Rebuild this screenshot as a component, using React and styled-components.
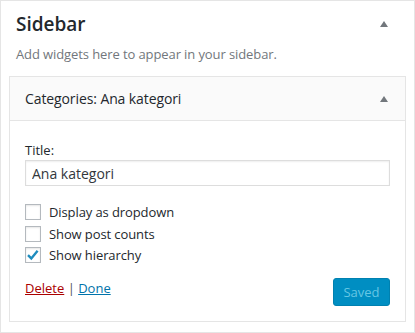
import React from "react"
import styled, { createGlobalStyle } from "styled-components"

const GlobalStyle = createGlobalStyle`
  body {
    margin: 0;
    background: #fff;
    font-family: "Open Sans", "Noto Sans", sans-serif;
    color: #23282d;
  }
`

const Panel = styled.div`
  width: 415px;
  height: 333px;
  box-sizing: border-box;
  border: 1px solid #e5e5e5;
  padding: 0 8px 9px;
  background: #fff;
`

const PanelHead = styled.div`
  display: flex;
  align-items: center;
  justify-content: space-between;
  padding: 9px 18px 0 7px;
`

const PanelTitle = styled.h2`
  margin: 0;
  font-size: 19px;
  font-weight: 600;
  line-height: 28px;
  color: #23282d;
`

const Description = styled.p`
  margin: 6px 0 0 7px;
  font-size: 13px;
  line-height: 20px;
  color: #72777c;
  letter-spacing: -0.1px;
`

const Arrow = styled.span`
  width: 0;
  height: 0;
  border-left: 4px solid transparent;
  border-right: 4px solid transparent;
  border-bottom: 6px solid #72777c;
`

const Widget = styled.div`
  margin-top: 12px;
  border: 1px solid #e5e5e5;
  background: #fff;
`

const WidgetTop = styled.div`
  display: flex;
  align-items: center;
  justify-content: space-between;
  height: 43px;
  padding: 0 17px 0 15px;
  background: #fafafa;
  border-bottom: 1px solid #e5e5e5;
  font-size: 14px;
  color: #23282d;
`

const WidgetName = styled.div`
  font-weight: 400;
  letter-spacing: -0.1px;
`

const WidgetBody = styled.div`
  padding: 20px 15px 15px;
  font-size: 13px;
`

const Label = styled.label`
  display: block;
  font-size: 13px;
  line-height: 18px;
  color: #23282d;
`

const TextInput = styled.input`
  display: block;
  box-sizing: border-box;
  width: 100%;
  height: 26px;
  margin: 1px 0 0;
  padding: 0 6px;
  border: 1px solid #ddd;
  box-shadow: inset 0 1px 2px rgba(0, 0, 0, 0.07);
  font-family: inherit;
  font-size: 14px;
  color: #32373c;
  outline: none;
`

const Options = styled.div`
  display: flex;
  flex-direction: column;
  gap: 5px;
  margin-top: 18px;
`

const OptionRow = styled.label`
  display: flex;
  align-items: center;
  gap: 8px;
  font-size: 13px;
  line-height: 16.5px;
  color: #23282d;
  letter-spacing: -0.1px;
`

const Box = styled.span`
  display: flex;
  align-items: center;
  justify-content: center;
  width: 16px;
  height: 16px;
  box-sizing: border-box;
  border: 1px solid #b4b9be;
  background: #fff;
  box-shadow: inset 0 1px 2px rgba(0, 0, 0, 0.1);
`

const Footer = styled.div`
  display: flex;
  justify-content: space-between;
  align-items: flex-start;
  margin-top: 14px;
`

const Links = styled.div`
  font-size: 13px;
  line-height: 20px;
  color: #555;
`

const TextLink = styled.a`
  color: ${p => (p.$danger ? "#a00" : "#0073aa")};
  text-decoration: underline;
`

const Button = styled.button`
  width: 57px;
  height: 28px;
  padding: 0;
  border: 1px solid #0081b0;
  border-radius: 3px;
  background: #008ec2;
  color: #66c6e4;
  font-family: inherit;
  font-size: 13px;
`

const Check = () => (
  <svg width="14" height="14" viewBox="0 0 14 14">
    <path d="M2 7.2 L5.3 10.4 L11.6 2.8" fill="none" stroke="#1e8cbe" strokeWidth="2.4" />
  </svg>
)

const options = [
  { label: "Display as dropdown", checked: false },
  { label: "Show post counts", checked: false },
  { label: "Show hierarchy", checked: true },
]

const App = () => (
  <>
    <GlobalStyle />
    <Panel>
      <PanelHead>
        <PanelTitle>Sidebar</PanelTitle>
        <Arrow />
      </PanelHead>
      <Description>Add widgets here to appear in your sidebar.</Description>
      <Widget>
        <WidgetTop>
          <WidgetName>Categories: Ana kategori</WidgetName>
          <Arrow />
        </WidgetTop>
        <WidgetBody>
          <Label>Title:</Label>
          <TextInput defaultValue="Ana kategori" />
          <Options>
            {options.map(o => (
              <OptionRow key={o.label}>
                <Box>{o.checked && <Check />}</Box>
                {o.label}
              </OptionRow>
            ))}
          </Options>
          <Footer>
            <Links>
              <TextLink $danger href="#">Delete</TextLink> | <TextLink href="#">Done</TextLink>
            </Links>
            <Button disabled>Saved</Button>
          </Footer>
        </WidgetBody>
      </Widget>
    </Panel>
  </>
)

export default App
